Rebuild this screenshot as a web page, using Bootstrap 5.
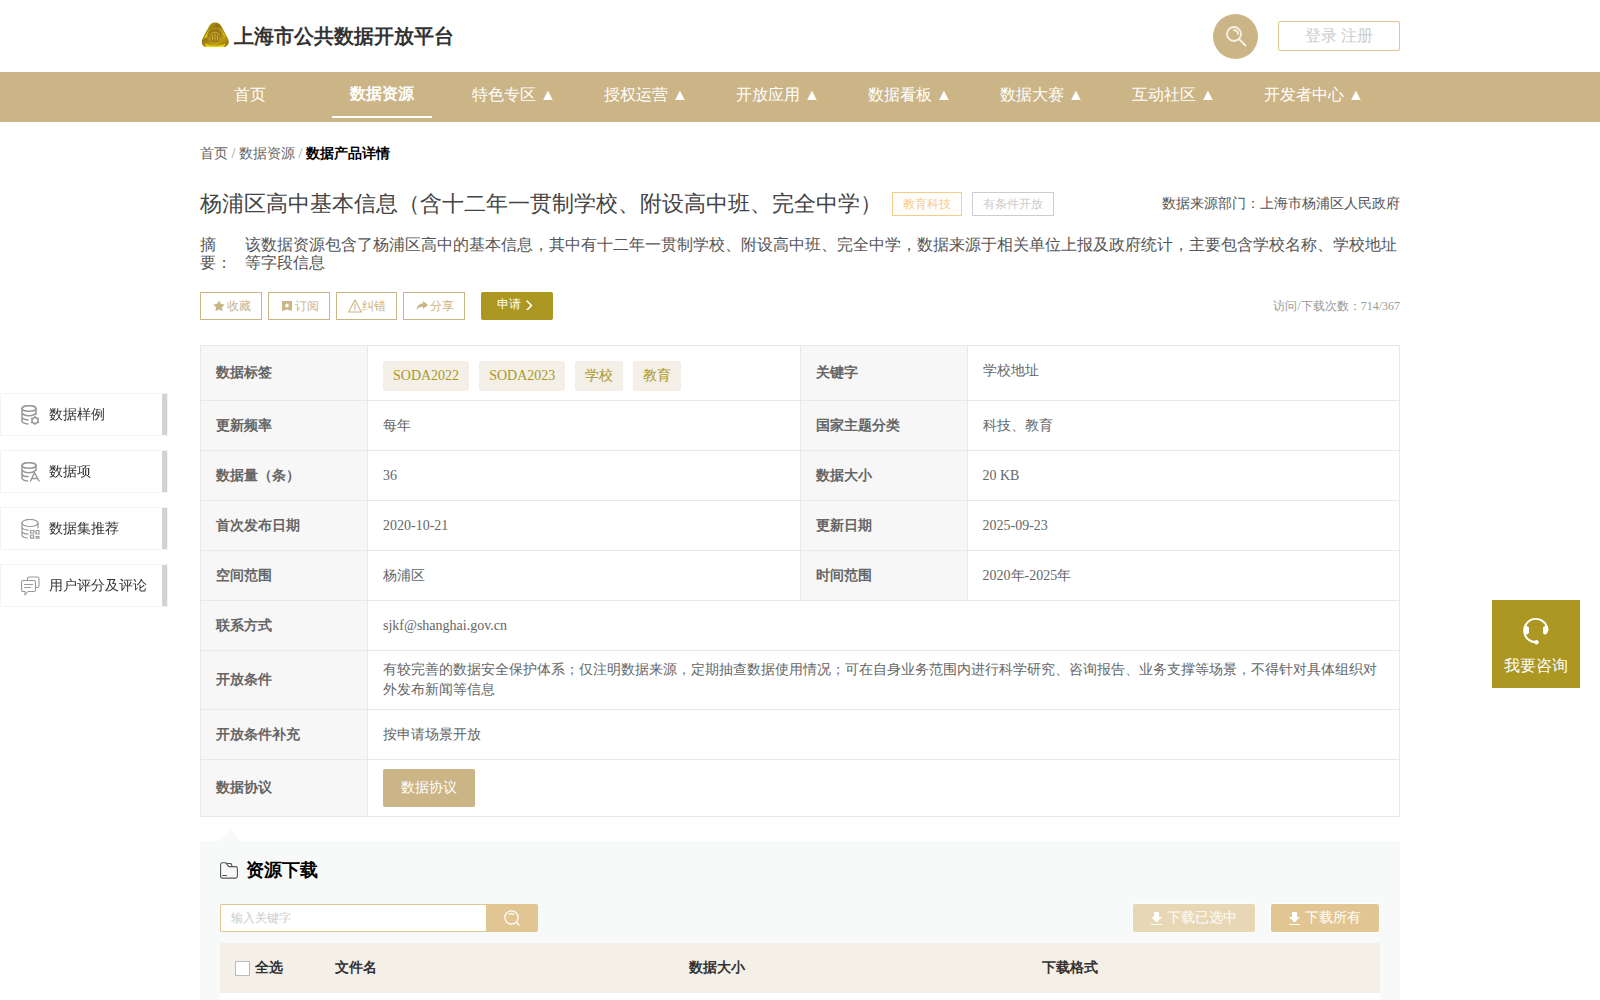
<!DOCTYPE html>
<html lang="zh">
<head>
<meta charset="utf-8">
<meta name="viewport" content="width=device-width, initial-scale=1">
<title>上海市公共数据开放平台</title>
<link rel="stylesheet" href="https://cdn.jsdelivr.net/npm/bootstrap@5.3.0/dist/css/bootstrap.min.css">
<style>
:root{--sand:#cbb486;--wheat:#e1c592;--olive:#ac9722}
body{font-family:"Liberation Serif",serif;font-size:14px;line-height:20px;color:#666;background:#fff}
a{text-decoration:none;color:inherit}
button,input{font-family:inherit}
.page-wrap{width:100%;max-width:1200px;margin:0 auto}
.top-bar{height:72px}
.brand-name{font-size:20px;font-weight:bold;color:#333;line-height:30px}
.round-search{width:45px;height:45px;border:0;border-radius:50%;background:var(--sand)}
.login-box{width:122px;height:30px;margin-left:20px;border:1px solid var(--wheat);border-radius:2px;font-size:16px;color:#ccc;line-height:28px}
.main-nav{background:var(--sand);height:50px}
.main-nav ul{gap:32px}
.main-nav a{display:block;min-width:100px;height:46px;padding:0 8px;font-size:16px;line-height:46px;color:#fff;text-align:center;white-space:nowrap}
.main-nav a.active{font-weight:bold;border-bottom:2px solid #fff;line-height:44px}
.crumbs{padding-top:22px}
.crumbs .sep{color:#999}
.crumbs strong{color:#000}
.title-row{margin-top:23px}
.data-title{font-size:22px;line-height:34px;font-weight:normal;color:#444;margin-right:10px}
.outline-tag{font-size:12px;line-height:22px;padding:0 10px;margin-right:10px;border:1px solid #ccc;color:#ccc}
.outline-tag.gold{border-color:#fbca87;color:#fbca87}
.dark-text{color:#555}
.summary{font-size:16px;line-height:18px;color:#555;margin-top:15px}
.summary dt{width:45px;padding-right:12px;font-weight:normal;flex:none}
.actions{margin-top:20px;gap:6px}
.act-btn{height:28px;border:1px solid var(--sand);background:#fff;color:var(--sand);font-size:12px;line-height:18px;padding:0 10px 0 11px}
.apply-btn{width:72px;height:28px;margin-left:10px;border:0;border-radius:2px;background:var(--olive);color:#fff;font-size:12px;line-height:18px;padding:0 0 4px}
.visits{font-size:12px;color:#999}
.info-table{width:100%;table-layout:fixed;border-collapse:collapse;color:#666;margin-top:25px}
.info-table th,.info-table td{border:1px solid #e9e9e9;height:50px;padding:9px 15px}
.info-table th{background:#f7f7f7;font-weight:bold}
.info-table .c-label{width:167px}
.chips{gap:10px;margin-top:6px}
.chip{background:#f4efe7;color:var(--olive);line-height:30px;padding:0 10px;border-radius:3px}
.agree-btn{height:38px;padding:0 18px;border:0;border-radius:2px;background:var(--sand);color:#fff}
.res-panel{position:relative;background:#f8faf9;padding:17px 20px 0}
.res-panel::before{content:"";position:absolute;left:20px;top:-12px;border:solid transparent;border-width:0 10px 12px;border-bottom-color:#f8faf9}
.res-panel h2{font-size:18px;line-height:24px;font-weight:bold;color:#000}
.tool-row{margin:21px 0 10px;gap:14px}
.find-box{width:318px;height:28px}
.find-box input{flex:1;min-width:0;border:1px solid var(--wheat);border-right:0;border-radius:2px 0 0 2px;padding:0 10px;font-size:12px;background:#fff;outline:0}
.find-box input::placeholder{color:#ccc}
.find-box button{width:52px;border:0;border-radius:0 2px 2px 0;background:var(--wheat)}
.dl-btn{height:30px;border:1px solid #fff;border-radius:3px;background:var(--wheat);color:#fff;font-size:14px;line-height:20px;padding:0 18px;gap:5px}
.dl-btn:disabled{opacity:.65}
.file-table{width:100%;table-layout:fixed;color:#333}
.file-table th{height:50px;padding:0;background:#f4efe7;font-weight:bold}
.file-table input{appearance:none;width:15px;height:15px;margin:0;border:1px solid #bbb;background:#fff}
.c-check{width:115px}
.c-format{width:338px}
.all-check{padding-left:15px;gap:5px}
.side-nav{position:fixed;left:0;top:393px;width:168px;gap:14px}
.side-nav a{height:43px;padding:1px 0 0 20px;border:1px solid #f3f3f3;color:#333;background:#fff;gap:9px;box-shadow:inset -5px 0 #d3d3d3;white-space:nowrap}
.consult{position:fixed;right:20px;top:600px;width:88px;height:88px;background:var(--olive);color:#fff;font-size:16px;line-height:22px;padding-top:16px;gap:10px}
svg{display:block;flex:none}
.ln{fill:none;stroke-linecap:round;stroke-linejoin:round}
</style>
<script src="https://cdn.jsdelivr.net/npm/bootstrap@5.3.0/dist/js/bootstrap.bundle.min.js"></script>
</head>
<body class="d-flex flex-column min-vh-100">
<header>
  <div class="page-wrap top-bar d-flex align-items-center">
    <a href="#" class="d-flex align-items-center me-auto">
      <svg width="34" height="30" viewBox="0 0 34 30">
        <defs><linearGradient id="gold" x1="0" y1="0" x2="1" y2="1"><stop offset="0" stop-color="#d6c400"/><stop offset=".35" stop-color="#8f7316"/><stop offset=".7" stop-color="#c3a20c"/><stop offset="1" stop-color="#7c650e"/></linearGradient></defs>
        <path d="M15 1.500c3 0 5 1.500 6.500 4 2 4 5 8.500 6.800 13 1.500 4-.8 6-3.300 7.500H5.500C2.500 25.500 1 22 2.300 18.500 4 14 7 9.500 9 5.500c1.300-2.600 3-4 6-4z" fill="url(#gold)"/>
        <path d="M5 22c3 3.500 17 3.500 21 0l-2 4H6zM19.500 6l6 10-3-3zM3.500 18l5.500-10-2 8z" fill="#e4d70a"/>
        <circle cx="15" cy="14.500" r="7.500" fill="#9a7a16" stroke="#b89a1c"/>
        <path class="ln" d="M10 19v-3m2.500 3v-5m2.500 5v-6m2.500 6v-5m2.500 5v-3M10 14q5-6 10 0" stroke="#c9ae38"/>
      </svg>
      <span class="brand-name">上海市公共数据开放平台</span>
    </a>
    <button type="button" class="round-search d-flex align-items-center justify-content-center p-0" aria-label="搜索">
      <svg width="22" height="22" viewBox="0 0 22 22" class="ln" stroke="#f7f2e8" stroke-width="1.800"><circle cx="9" cy="9" r="7"/><path d="M14 14l6.500 6.500M9 5q3.500.3 4 4"/></svg>
    </button>
    <a href="#" class="login-box text-center">登录 注册</a>
  </div>
  <nav class="main-nav">
    <ul class="page-wrap list-unstyled d-flex mb-0">
      <li><a href="#">首页</a></li>
      <li><a href="#" class="active">数据资源</a></li>
      <li><a href="#">特色专区 ▲</a></li>
      <li><a href="#">授权运营 ▲</a></li>
      <li><a href="#">开放应用 ▲</a></li>
      <li><a href="#">数据看板 ▲</a></li>
      <li><a href="#">数据大赛 ▲</a></li>
      <li><a href="#">互动社区 ▲</a></li>
      <li><a href="#">开发者中心 ▲</a></li>
    </ul>
  </nav>
</header>

<main class="page-wrap d-flex flex-column flex-grow-1">
  <nav class="crumbs"><a href="#">首页</a> <span class="sep">/</span> <a href="#">数据资源</a> <span class="sep">/</span> <strong>数据产品详情</strong></nav>

  <div class="title-row d-flex align-items-center">
    <h1 class="data-title mb-0">杨浦区高中基本信息（含十二年一贯制学校、附设高中班、完全中学）</h1>
    <span class="outline-tag gold">教育科技</span>
    <span class="outline-tag">有条件开放</span>
    <span class="ms-auto dark-text">数据来源部门：上海市杨浦区人民政府</span>
  </div>

  <dl class="summary d-flex mb-0">
    <dt>摘要：</dt>
    <dd class="mb-0">该数据资源包含了杨浦区高中的基本信息，其中有十二年一贯制学校、附设高中班、完全中学，数据来源于相关单位上报及政府统计，主要包含学校名称、学校地址等字段信息</dd>
  </dl>

  <div class="actions d-flex align-items-center">
    <button type="button" class="act-btn d-flex align-items-center"><svg width="15" height="12" viewBox="0 0 15 12"><path d="M7 .5l1.800 3.300 3.900.7-2.700 2.800.5 3.900L7 9.500l-3.500 1.700.5-3.900L1.300 4.500l3.900-.7z" fill="#cbb486"/></svg>收藏</button>
    <button type="button" class="act-btn d-flex align-items-center"><svg width="15" height="12" viewBox="0 0 15 12"><path d="M2 1h10v10L7 9.500 2 11z" fill="#cbb486"/><path d="M7 3l.8 1.500 1.700.3-1.200 1.200.2 1.700L7 7l-1.500.7.2-1.700-1.200-1.200 1.700-.3z" fill="#fff"/></svg>订阅</button>
    <button type="button" class="act-btn d-flex align-items-center"><svg width="14" height="14" viewBox="0 0 14 14" class="ln" stroke="#cbb486" stroke-width="1.100"><path d="M7 1l6.400 12H.6zM7 5v4.500M7 11v.3"/></svg>纠错</button>
    <button type="button" class="act-btn d-flex align-items-center"><svg width="15" height="12" viewBox="0 0 15 12"><path d="M8 1l5 4-5 4V6.800C5 6.800 3 7.500 1.500 10 2 6 4.500 3.600 8 3.300z" fill="#cbb486"/></svg>分享</button>
    <button type="button" class="apply-btn d-flex align-items-center justify-content-center gap-1">申请<svg width="12" height="12" viewBox="0 0 12 12" class="ln" stroke="#fff" stroke-width="1.600"><path d="M2 3l4.500 4.500L2 12"/></svg></button>
    <span class="visits ms-auto">访问/下载次数：714/367</span>
  </div>

  <table class="info-table">
    <colgroup><col class="c-label"><col><col class="c-label"><col></colgroup>
    <tbody>
    <tr><th scope="row">数据标签</th><td><div class="chips d-flex"><span class="chip">SODA2022</span><span class="chip">SODA2023</span><span class="chip">学校</span><span class="chip">教育</span></div></td><th scope="row">关键字</th><td><div class="pb-1">学校地址</div></td></tr>
    <tr><th scope="row">更新频率</th><td>每年</td><th scope="row">国家主题分类</th><td>科技、教育</td></tr>
    <tr><th scope="row">数据量（条）</th><td>36</td><th scope="row">数据大小</th><td>20 KB</td></tr>
    <tr><th scope="row">首次发布日期</th><td>2020-10-21</td><th scope="row">更新日期</th><td>2025-09-23</td></tr>
    <tr><th scope="row">空间范围</th><td>杨浦区</td><th scope="row">时间范围</th><td>2020年-2025年</td></tr>
    <tr><th scope="row">联系方式</th><td colspan="3">sjkf@shanghai.gov.cn</td></tr>
    <tr><th scope="row">开放条件</th><td colspan="3">有较完善的数据安全保护体系；仅注明数据来源，定期抽查数据使用情况；可在自身业务范围内进行科学研究、咨询报告、业务支撑等场景，不得针对具体组织对外发布新闻等信息</td></tr>
    <tr><th scope="row">开放条件补充</th><td colspan="3">按申请场景开放</td></tr>
    <tr><th scope="row">数据协议</th><td colspan="3"><button type="button" class="agree-btn d-block">数据协议</button></td></tr>
    </tbody>
  </table>

  <section class="res-panel mt-4 d-flex flex-column flex-grow-1">
    <h2 class="d-flex align-items-center gap-2 mb-0"><svg width="18" height="17" viewBox="0 0 18 17" class="ln" stroke="#555" stroke-width="1.100"><path d="M2.500.8h3.300l3 3.800h6.700q1.900 0 1.900 1.900v7.700q0 1.900-1.900 1.900h-13Q.6 16.100.6 14.200V2.700Q.6.800 2.500.8zM6.500 1.500H11l1 2.800M2.500 13.500h4"/></svg>资源下载</h2>
    <div class="tool-row d-flex align-items-center">
      <form class="find-box d-flex me-auto">
        <input type="text" placeholder="输入关键字" aria-label="输入关键字">
        <button type="button" class="d-flex align-items-center justify-content-center p-0" aria-label="搜索"><svg width="16" height="16" viewBox="0 0 16 16" class="ln" stroke="#fff" stroke-width="1.300"><circle cx="7.500" cy="7.500" r="6.600"/><path d="M12.500 12.500l2.500 2.500M5 4.500q2.500-1.600 5 0"/></svg></button>
      </form>
      <button type="button" class="dl-btn d-flex align-items-center" disabled><svg width="11" height="13" viewBox="0 0 11 13"><path d="M3 0h5v5h3L5.500 10.500 0 5h3zM0 12h11v1H0z" fill="#fff"/></svg>下载已选中</button>
      <button type="button" class="dl-btn d-flex align-items-center"><svg width="11" height="13" viewBox="0 0 11 13"><path d="M3 0h5v5h3L5.500 10.500 0 5h3zM0 12h11v1H0z" fill="#fff"/></svg>下载所有</button>
    </div>
    <div class="bg-white flex-grow-1">
      <table class="file-table">
        <colgroup><col class="c-check"><col><col><col class="c-format"></colgroup>
        <thead><tr>
          <th scope="col"><label class="all-check d-flex align-items-center"><input type="checkbox">全选</label></th>
          <th scope="col">文件名</th><th scope="col">数据大小</th><th scope="col">下载格式</th>
        </tr></thead>
      </table>
    </div>
  </section>
</main>

<nav class="side-nav d-flex flex-column">
  <a href="#" class="d-flex align-items-center"><svg width="19" height="20" viewBox="0 0 19 20" class="ln" stroke="#999" stroke-width="1.500"><ellipse cx="8" cy="3.500" rx="7" ry="2.800"/><path d="M1 3.500v13q1 2 6 2.500M15 3.500v6M1 8q2 2.800 7 2.700 5 0 7-2.700M1 12.300q1.500 2.400 6 2.500"/><circle cx="14" cy="15.500" r="3"/><path d="M14 11.500v1M14 18.500v1M10.500 13.500l.9.500M16.600 17l.9.500M10.500 17.500l.9-.5M16.600 14l.9-.5"/></svg>数据样例</a>
  <a href="#" class="d-flex align-items-center"><svg width="19" height="20" viewBox="0 0 19 20" class="ln" stroke="#999" stroke-width="1.500"><ellipse cx="8" cy="3.500" rx="7" ry="2.800"/><path d="M1 3.500v13q1 2 5.500 2.500M15 3.500v5M1 8q2 2.800 7 2.700 4 0 6-2M1 12.300q1.500 2.400 6 2.300M9.500 19l4-8.500 4.500 8.500M11 16.500h5.500"/></svg>数据项</a>
  <a href="#" class="d-flex align-items-center"><svg width="19" height="20" viewBox="0 0 19 20" class="ln" stroke="#999" stroke-width="1.200"><ellipse cx="9" cy="4" rx="8" ry="3.500"/><path d="M1 4v12.500q1 2.200 5.500 2.500M17 4v5M1 8.500q1.500 2.400 6 2.600M1 12.700q1.500 2.300 6 2.400M9.500 11.500h3.500v2.500H9.500zM15 11.500h3v3.500h-3zM9.500 16h3v3.200h-3zM15 17.500h3v1.700h-3z"/></svg>数据集推荐</a>
  <a href="#" class="d-flex align-items-center"><svg width="19" height="20" viewBox="0 0 19 20" class="ln" stroke="#999" stroke-width="1.100"><path d="M6.500 4V2.500Q6.500 1 8 1h8.500q1.500 0 1.500 1.500V10q0 1.500-1.500 1.500h-1.500M2 4.500h11q1.500 0 1.500 1.500v8q0 1.500-1.500 1.500H7L4 19v-3.500H2Q.6 15.500.6 14V6Q.6 4.500 2 4.500zM3.500 8.500h8M3.500 11.500h6"/></svg>用户评分及评论</a>
</nav>

<a href="#" class="consult d-flex flex-column align-items-center"><svg width="28" height="29" viewBox="0 0 28 29"><path d="M25.500 14A11.700 11.700 0 1 0 14 26.300" fill="none" stroke="#fff" stroke-width="1.900"/><path d="M2 10.500q4-1.500 5 1v5q-1 3-4 1.500-2-3.500-1-7.500zM26 10.500q-4-1.500-5 1v5q.5 3 3.500 1.500 2.500-3 1.500-7.500z" fill="#fff"/><circle cx="14.500" cy="26.300" r="2.200" fill="#fff"/></svg><span>我要咨询</span></a>
</body>
</html>
